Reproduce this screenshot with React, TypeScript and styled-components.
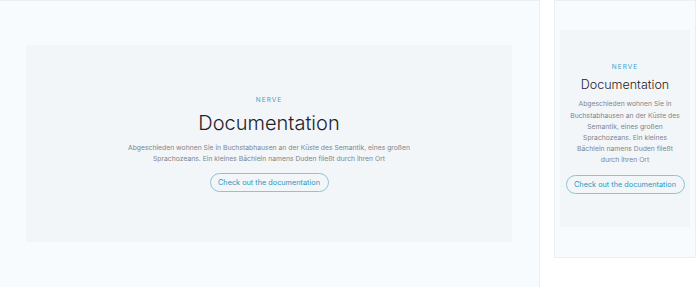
import React from "react";
import styled, { createGlobalStyle } from "styled-components";

const Global = createGlobalStyle`
  html, body { margin: 0; padding: 0; background: #ffffff; }
  body { font-family: Inter, "Noto Sans", sans-serif; overflow: hidden; }
  * { box-sizing: border-box; }
`;

const Stage = styled.div`
  display: flex;
  align-items: flex-start;
  gap: 14px;
  width: 696px;
  height: 287px;
  overflow: hidden;
`;

const Frame = styled.div<{ $wide?: boolean }>`
  flex: none;
  width: ${(p) => (p.$wide ? "540px" : "142px")};
  height: ${(p) => (p.$wide ? "300px" : "258px")};
  background: #f8fbfd;
  border: 1px solid #eceff2;
  border-left: ${(p) => (p.$wide ? "none" : "1px solid #eceff2")};
  padding: ${(p) => (p.$wide ? "44px 27px 0 26px" : "29px 5px 0 5px")};
`;

const Card = styled.section<{ $wide?: boolean }>`
  height: 197px;
  background: #f3f6f9;
  display: flex;
  flex-direction: column;
  align-items: center;
  text-align: center;
  padding: ${(p) => (p.$wide ? "51px 90px 0" : "33px 8px 0")};
`;

const Eyebrow = styled.div`
  font-size: 6.5px;
  letter-spacing: 1px;
  color: #3aa3cc;
  line-height: 8px;
  text-transform: uppercase;
`;

const Title = styled.h1<{ $wide?: boolean }>`
  margin: ${(p) => (p.$wide ? "6px 0 5.5px" : "6px 0 5.4px")};
  font-weight: 300;
  color: #1f2329;
  font-size: ${(p) => (p.$wide ? "20px" : "12.5px")};
  line-height: ${(p) => (p.$wide ? "26px" : "16px")};
`;

const Text = styled.p<{ $wide?: boolean }>`
  margin: 0;
  max-width: ${(p) => (p.$wide ? "none" : "110px")};
  font-size: 6.8px;
  line-height: ${(p) => (p.$wide ? "11px" : "11.2px")};
  color: #80858d;
`;

const Button = styled.a`
  margin-top: 9.5px;
  display: inline-flex;
  align-items: center;
  justify-content: center;
  width: 119px;
  height: 19px;
  border: 1px solid #86c6da;
  border-radius: 10px;
  font-size: 7.3px;
  color: #2a97c0;
  text-decoration: none;
`;

const Preview = ({ wide }: { wide?: boolean }) => (
  <Frame $wide={wide}>
    <Card $wide={wide}>
      <Eyebrow>Nerve</Eyebrow>
      <Title $wide={wide}>Documentation</Title>
      <Text $wide={wide}>
        Abgeschieden wohnen Sie in Buchstabhausen an der Küste des Semantik,
        eines großen Sprachozeans. Ein kleines Bächlein namens Duden fließt
        durch ihren Ort
      </Text>
      <Button href="#">Check out the documentation</Button>
    </Card>
  </Frame>
);

export default function App() {
  return (
    <>
      <Global />
      <Stage>
        <Preview wide />
        <Preview />
      </Stage>
    </>
  );
}
